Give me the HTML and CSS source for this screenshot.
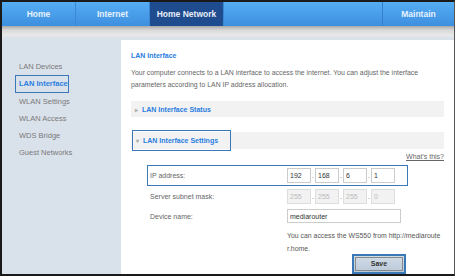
FILE: index.html
```html
<!DOCTYPE html>
<html lang="en">
<head>
    <meta charset="UTF-8">
    <title>LAN Interface</title>
    <link rel="stylesheet" href="styles.css">
</head>
<body>
    <div class="frame">
        <nav class="nav">
            <a class="nav-item" href="#">Home</a>
            <a class="nav-item" href="#">Internet</a>
            <a class="nav-item active" href="#">Home Network</a>
            <span class="nav-fill"></span>
            <a class="nav-item last" href="#">Maintain</a>
        </nav>
        <div class="subbar"></div>
        <div class="main">
            <ul class="side">
                <li>LAN Devices</li>
                <li class="current">LAN Interface</li>
                <li>WLAN Settings</li>
                <li>WLAN Access</li>
                <li>WDS Bridge</li>
                <li>Guest Networks</li>
            </ul>
            <div class="content">
                <h1 class="title">LAN Interface</h1>
                <p class="intro">Your computer connects to a LAN interface to access the internet. You can adjust the interface parameters according to LAN IP address allocation.</p>
                <div class="section-bar"><span class="arrow">&#9656;</span> LAN Interface Status</div>
                <div class="section-bar open"><span class="outlined"><span class="arrow">&#9662;</span> LAN Interface Settings</span></div>
                <div class="whats"><a href="#">What's this?</a></div>
                <div class="row highlight">
                    <span class="label">IP address:</span>
                    <span class="ip">
                        <input class="octet" value="192"><i>.</i><input class="octet" value="168"><i>.</i><input class="octet" value="6"><i>.</i><input class="octet" value="1">
                    </span>
                </div>
                <div class="row">
                    <span class="label">Server subnet mask:</span>
                    <span class="ip">
                        <input class="octet" value="255" disabled><i>.</i><input class="octet" value="255" disabled><i>.</i><input class="octet" value="255" disabled><i>.</i><input class="octet" value="0" disabled>
                    </span>
                </div>
                <div class="row">
                    <span class="label">Device name:</span>
                    <input class="name-input" value="mediarouter">
                </div>
                <p class="note">You can access the WS550 from http://mediarouter.home.</p>
                <div class="actions"><button class="save">Save</button></div>
            </div>
        </div>
    </div>
</body>
</html>
```

FILE: styles.css
```css
html, body {
    margin: 0;
    padding: 0;
    font-family: "Liberation Sans", Arial, sans-serif;
    background: #fff;
}
.frame {
    width: 455px;
    height: 276px;
    box-sizing: border-box;
    border-top: 2px solid #1a1a1a;
    border-left: 2px solid #1a1a1a;
    border-right: 1px solid #555;
    border-bottom: 2px solid #1a1a1a;
    display: flex;
    flex-direction: column;
    overflow: hidden;
}
.nav {
    height: 24px;
    flex-shrink: 0;
    display: flex;
    background: linear-gradient(#55adf3, #3d8fdf);
}
.nav-item {
    display: flex;
    align-items: center;
    justify-content: center;
    color: #e6f2ff;
    text-decoration: none;
    font-size: 8.5px;
    font-weight: bold;
    width: 73px;
    border-right: 1px solid #3a87d3;
}
.nav-item.active {
    background: #1f4c8f;
    color: #e8eef8;
}
.nav-fill {
    flex: 1;
}
.nav-item.last {
    border-right: none;
    border-left: 1px solid #3480cc;
    width: 71px;
}
.subbar {
    height: 10px;
    flex-shrink: 0;
    background: linear-gradient(#a9a9a9, #d8d8d8 40%, #ebebeb);
    border-bottom: 2px solid #e0e4ea;
}
.main {
    flex: 1;
    display: flex;
    background: #d9e1eb;
    min-height: 0;
}
.side {
    list-style: none;
    margin: 0;
    padding: 20px 0 0 14px;
    width: 119px;
    box-sizing: border-box;
    flex-shrink: 0;
}
.side li {
    font-size: 7.5px;
    color: #7a7a7a;
    height: 17px;
    line-height: 17px;
    padding-left: 3px;
}
.side li.current {
    color: #2a7de0;
    font-weight: bold;
    border: 1px solid #3a78b8;
    width: 49px;
    height: 16px;
    line-height: 16px;
    margin-left: -1px;
}
.content {
    flex: 1;
    background: #fff;
    margin-top: 2px;
    padding: 12px 10px 0 10px;
}
.title {
    margin: 0;
    font-size: 7px;
    line-height: 8px;
    font-weight: bold;
    color: #2a7de0;
}
.intro {
    margin: 7px 0 0;
    font-size: 6.9px;
    line-height: 12px;
    color: #666;
    width: 300px;
}
.section-bar {
    margin-top: 10px;
    height: 16px;
    background: #f2f2f2;
    font-size: 7px;
    font-weight: bold;
    color: #2a7de0;
    display: flex;
    align-items: center;
    padding-left: 4px;
}
.section-bar.open {
    margin-top: 15px;
    height: 17px;
    padding-left: 0;
    align-items: stretch;
}
.outlined {
    border: 1px solid #3a78b8;
    display: flex;
    align-items: center;
    margin: -2px 0 -2px 1px;
    padding: 0 12px 0 3px;
}
.arrow {
    color: #aaa;
    font-size: 6px;
    margin-right: 4px;
}
.whats {
    text-align: right;
    font-size: 7px;
    line-height: 8px;
    margin-top: 4px;
}
.whats a {
    color: #666;
}
.row {
    display: flex;
    align-items: center;
    height: 20px;
    box-sizing: border-box;
    margin-left: 16px;
    width: 261px;
    font-size: 7px;
    color: #666;
    border: 1px solid transparent;
}
.row.highlight {
    height: 21px;
    margin-top: 4px;
    border-color: #3a78b8;
}
.label {
    width: 137px;
    padding-left: 2px;
}
.ip {
    display: flex;
    align-items: center;
}
.ip i {
    font-style: normal;
    width: 4px;
    text-align: center;
    font-size: 7px;
}
.octet, .name-input {
    font-family: "Liberation Sans", Arial, sans-serif;
    font-size: 7px;
    color: #333;
    border: 1px solid #ccc;
    height: 15px;
    box-sizing: border-box;
    padding: 0 2px;
    margin: 0;
    width: 24px;
    background: #fff;
}
.octet:disabled {
    background: #f2f2f2;
    color: #bbb;
    border-color: #ddd;
}
.name-input {
    width: 114px;
    height: 14px;
}
.note {
    margin: 3px 0 0 156px;
    font-size: 6.9px;
    line-height: 13px;
    color: #555;
    width: 155px;
    word-break: break-all;
}
.actions {
    margin-left: 221px;
    margin-top: -3px;
}
.save {
    width: 54px;
    height: 20px;
    border: 2px solid #3a78b8;
    outline: 1px solid #888;
    outline-offset: -4px;
    background: linear-gradient(#d3dde8, #b9c8d8);
    font-family: "Liberation Sans", Arial, sans-serif;
    font-size: 7px;
    font-weight: bold;
    color: #333;
    padding: 0;
}
```
